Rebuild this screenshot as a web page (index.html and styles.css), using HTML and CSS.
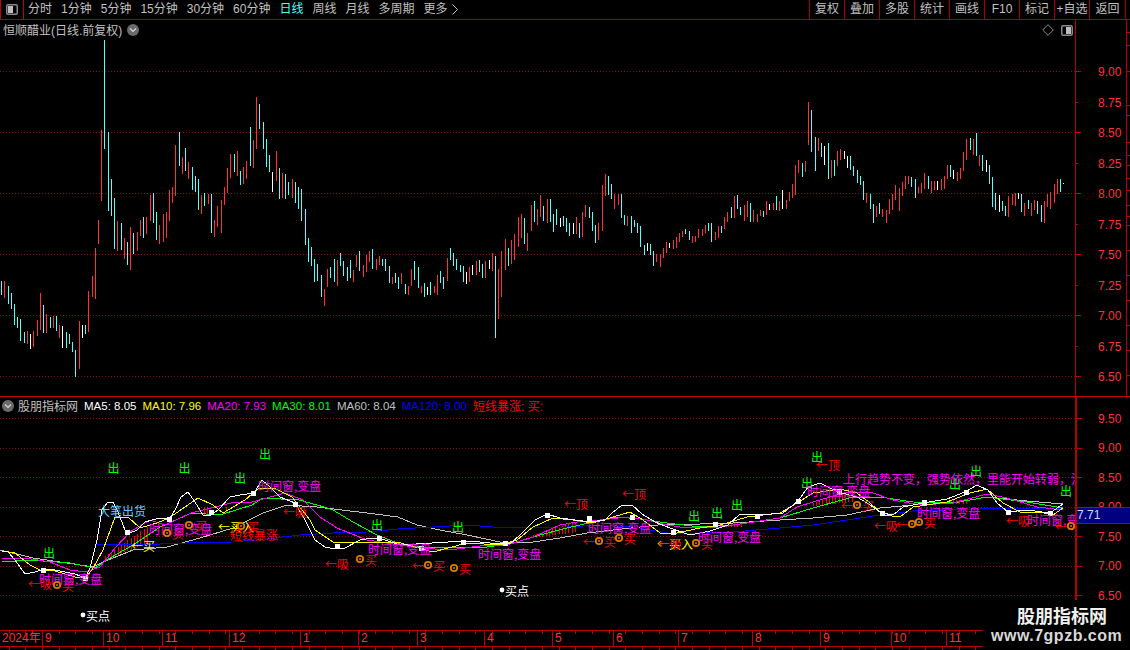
FILE: index.html
```html
<!DOCTYPE html>
<html lang="zh">
<head>
<meta charset="utf-8">
<title>恒顺醋业</title>
<link rel="stylesheet" href="styles.css">
</head>
<body>
<div class="page">
  <header class="toolbar">
    <div class="panel-btn">
      <svg class="split-icon" viewBox="0 0 12 11"><rect x="0.75" y="0.75" width="10.5" height="9.5" rx="1.5" class="split-frame"/><rect x="2" y="2" width="5" height="7" class="split-left"/></svg>
    </div>
    <nav class="tabs">
      <span>分时</span><span>1分钟</span><span>5分钟</span><span>15分钟</span><span>30分钟</span><span>60分钟</span><span class="active">日线</span><span>周线</span><span>月线</span><span>多周期</span><span>更多</span>
      <svg class="more-arrow" viewBox="0 0 6 11"><path d="M0.5 0.5 L5.5 5.5 L0.5 10.5" /></svg>
    </nav>
    <div class="tools">
      <span>复权</span><span>叠加</span><span>多股</span><span>统计</span><span>画线</span><span>F10</span><span>标记</span><span>+自选</span><span>返回</span>
    </div>
  </header>

  <section class="main-panel">
    <svg class="chart main-chart" viewBox="0 20 1130 376">
      <g class="grid">
        <path d="M0 71.5H1075M0 132.5H1075M0 193.5H1075M0 254.5H1075M0 315.5H1075M0 376.5H1075"/>
      </g>
      <g id="candles"></g>
      <path class="axis" d="M1075.5 20V396M1126.5 20V396"/>
      <path class="axis" d="M1075 71.5H1081M1075 102.5H1078M1075 132.5H1081M1075 163.5H1078M1075 193.5H1081M1075 224.5H1078M1075 254.5H1081M1075 285.5H1078M1075 315.5H1081M1075 346.5H1078M1075 376.5H1081"/>
      <path class="axis" d="M1126 32.5H1130M1126 45.5H1130M1126 71.5H1130M1126 105.5H1130M1126 115.5H1130M1126 142.5H1130M1126 155.5H1130M1126 165.5H1130M1126 178.5H1130M1126 190.5H1130M1126 205.5H1130M1126 216.5H1130M1126 225.5H1130M1126 250.5H1130M1126 275.5H1130M1126 300.5H1130M1126 325.5H1130M1126 350.5H1130M1126 375.5H1130"/>
      <g class="price">
        <text x="1098" y="72">9.00</text><text x="1098" y="103">8.75</text><text x="1098" y="133">8.50</text><text x="1098" y="164">8.25</text><text x="1098" y="194">8.00</text><text x="1098" y="225">7.75</text><text x="1098" y="255">7.50</text><text x="1098" y="286">7.25</text><text x="1098" y="316">7.00</text><text x="1098" y="347">6.75</text><text x="1098" y="377">6.50</text>
      </g>
    </svg>
    <div class="stock-title">
      <span>恒顺醋业(日线.前复权)</span>
      <svg class="chev-icon" viewBox="0 0 12 12"><circle cx="6" cy="6" r="6" class="chev-disc"/><path d="M3 4.5 L6 7.5 L9 4.5" class="chev-mark"/></svg>
    </div>
    <div class="chart-tools">
      <svg class="diamond-icon" viewBox="0 0 12 12"><path d="M6 0.7 L11.3 6 L6 11.3 L0.7 6 Z"/></svg>
      <svg class="split-icon" viewBox="0 0 12 11"><rect x="0.75" y="0.75" width="10.5" height="9.5" rx="1.5" class="split-frame"/><rect x="5" y="2" width="5" height="7" class="split-left"/></svg>
    </div>
  </section>

  <section class="lower-panel">
    <svg class="chart lower-chart" viewBox="0 397 1130 253">
      <defs><clipPath id="plot"><rect x="0" y="397" width="1075" height="233"/></clipPath></defs>
      <g class="grid">
        <path d="M0 418.5H1075M0 448.5H1075M0 477.5H1075M0 507.5H1075M0 536.5H1075M0 566.5H1075M0 595.5H1075"/>
      </g>
      <g id="fills"></g>
      <g class="curves">
        <polyline class="c-gray" points="0,550 33,558 67,563 93,567 103,562 133,550 167,547 200,538 233,528 263,513 287,505 317,507 367,513 398,517 417,525 440,530 467,535 500,542 533,542 560,538 587,533 613,530 640,527 667,524 700,524 733,523 780,520 813,518 847,515 880,508 913,505 953,503 987,497 1027,501 1063,504"/>
        <polyline class="c-blue" points="95,544 160,544 187,543 233,542 267,539 300,535 333,533 367,532 398,529 433,527 467,525 493,527 533,527 567,527 600,525 633,527 667,533 700,533 733,532 780,528 813,525 847,520 880,515 913,511 980,509 1063,508"/>
        <polyline class="c-green" points="2,562 30,560 70,563 95,568 110,558 133,545 160,527 187,515 191,513 220,515 252,505 263,498 299,500 324,507 333,510 353,522 377,535 400,544 420,547 457,547 487,547 513,543 540,535 567,528 593,522 617,517 640,519 667,523 700,527 733,525 780,518 813,508 853,497 880,497 913,502 953,503 987,497 1027,502 1063,508"/>
        <polyline class="c-magenta" points="2,559 25,558 50,562 70,570 85,572 100,567 115,548 130,532 150,520 165,525 191,513 231,503 252,502 285,493 303,500 320,517 337,528 367,540 400,545 420,548 450,550 480,546 507,545 533,537 560,525 577,522 600,520 627,517 647,520 667,525 687,528 720,527 747,523 780,518 797,507 813,502 847,492 870,492 893,500 920,505 953,503 987,494 1007,498 1037,507 1063,510"/>
        <polyline class="c-yellow" points="2,551 15,553 30,565 40,570 55,571 75,577 85,578 92,570 103,550 115,517 128,517 140,528 157,523 169,518 198,498 213,505 223,513 245,500 259,488 274,488 292,497 310,520 315,530 333,542 367,543 397,542 433,552 467,543 500,545 517,540 533,527 553,518 573,520 593,523 613,517 630,512 643,520 660,533 677,533 700,528 720,525 747,517 780,513 797,503 813,493 840,489 857,493 870,503 883,515 900,517 913,507 947,502 970,493 987,489 1003,503 1020,512 1040,512 1053,515 1063,508"/>
        <polyline class="c-white" points="2,551 8,552 15,560 25,574 35,572 45,569 55,570 65,572 75,574 85,578 90,568 97,540 102,510 107,503 113,502 118,512 125,530 130,533 137,530 145,522 152,520 160,518 170,518 175,510 181,497 188,492 195,502 203,515 210,516 218,510 230,497 240,495 254,493 262,480 270,487 280,497 295,503 305,520 315,540 325,547 335,549 345,548 360,540 372,538 385,540 400,545 448,542 470,541 490,543 510,544 520,535 535,520 547,514 560,518 575,520 590,522 605,520 612,513 622,505 632,505 642,514 655,522 670,528 690,535 710,531 728,525 740,514 760,515 783,513 798,501 808,487 820,483 838,492 857,497 867,503 882,513 893,515 903,507 923,503 947,499 965,492 977,485 988,490 997,503 1008,512 1027,510 1050,513 1063,504"/>
      </g>
      <g class="squares">
        <rect x="41" y="568" width="5" height="5"/><rect x="83" y="576" width="5" height="5"/><rect x="125" y="530" width="5" height="5"/><rect x="167" y="517" width="5" height="5"/><rect x="209" y="510" width="5" height="5"/><rect x="251" y="491" width="5" height="5"/><rect x="293" y="502" width="5" height="5"/><rect x="335" y="544" width="5" height="5"/><rect x="377" y="536" width="5" height="5"/><rect x="419" y="546" width="5" height="5"/><rect x="461" y="540" width="5" height="5"/><rect x="503" y="541" width="5" height="5"/><rect x="545" y="513" width="5" height="5"/><rect x="587" y="516" width="5" height="5"/><rect x="630" y="515" width="5" height="5"/><rect x="671" y="530" width="5" height="5"/><rect x="713" y="522" width="5" height="5"/><rect x="755" y="514" width="5" height="5"/><rect x="796" y="499" width="5" height="5"/><rect x="837" y="490" width="5" height="5"/><rect x="880" y="511" width="5" height="5"/><rect x="922" y="500" width="5" height="5"/><rect x="964" y="490" width="5" height="5"/><rect x="1006" y="510" width="5" height="5"/><rect x="1048" y="511" width="5" height="5"/>
      </g>
      <g clip-path="url(#plot)">
        <g class="lbl l-magenta">
          <text x="39" y="578">时间窗,变盘</text><text x="149" y="528">时间窗,变盘</text><text x="258" y="485">时间窗,变盘</text><text x="368" y="548">时间窗,变盘</text><text x="478" y="553">时间窗,变盘</text><text x="588" y="527">时间窗,变盘</text><text x="698" y="536">时间窗,变盘</text><text x="807" y="490">时间窗,变盘</text><text x="917" y="512">时间窗,变盘</text><text x="1027" y="519">时间窗,变盘</text>
          <text x="843" y="478">上行趋势不变，强势依然，里能开始转弱，注意</text>
        </g>
        <g class="lbl l-yellow">
          <text x="131" y="545">←买</text><text x="218" y="526">←买入</text><text x="657" y="543">←买入</text>
        </g>
        <g class="lbl l-red">
          <text x="28" y="583">←吸</text><text x="283" y="511">←吸</text><text x="325" y="563">←吸</text><text x="658" y="543">←吸</text><text x="874" y="525">←吸</text><text x="1006" y="520">←吸</text>
          <text x="564" y="503">←顶</text><text x="622" y="493">←顶</text><text x="816" y="464">←顶</text>
          <text x="230" y="534">短线暴涨</text>
          <text x="62" y="585">买</text><text x="172" y="533">买</text><text x="195" y="525">买</text><text x="247" y="526">买</text><text x="365" y="559">买</text><text x="412" y="565">←</text><text x="433" y="565">买</text><text x="459" y="568">买</text><text x="583" y="541">←</text><text x="604" y="541">买</text><text x="624" y="538">买</text><text x="701" y="543">买</text><text x="841" y="505">←</text><text x="862" y="505">买</text><text x="896" y="524">←</text><text x="924" y="522">买</text><text x="1055" y="526">←</text>
        </g>
        <g class="bullseye" id="bullseye">
          <circle cx="57" cy="585" r="3.2"/><circle cx="167" cy="533" r="3.2"/><circle cx="189" cy="525" r="3.2"/><circle cx="241" cy="526" r="3.2"/><circle cx="360" cy="559" r="3.2"/><circle cx="428" cy="565" r="3.2"/><circle cx="454" cy="568" r="3.2"/><circle cx="599" cy="541" r="3.2"/><circle cx="619" cy="538" r="3.2"/><circle cx="696" cy="543" r="3.2"/><circle cx="857" cy="505" r="3.2"/><circle cx="912" cy="524" r="3.2"/><circle cx="919" cy="522" r="3.2"/><circle cx="1071" cy="526" r="3.2"/>
        </g>
        <g class="lbl l-cyan"><text x="98" y="510">大笔出货</text></g>
        <g class="lbl l-green">
          <text x="107.5" y="467">出</text><text x="178.5" y="467">出</text><text x="234" y="477">出</text><text x="259" y="453">出</text><text x="43" y="552">出</text><text x="371" y="524">出</text><text x="452" y="526">出</text><text x="688" y="515">出</text><text x="711" y="512">出</text><text x="731" y="504">出</text><text x="811" y="456">出</text><text x="801" y="482">出</text><text x="949" y="483">出</text><text x="970" y="470">出</text><text x="1060" y="490">出</text>
        </g>
        <g class="lbl l-white"><text x="86" y="615">买点</text><text x="505" y="590">买点</text></g>
        <circle class="dot" cx="83" cy="615" r="2.4"/><circle class="dot" cx="502" cy="590" r="2.4"/>
      </g>
      <path class="axis axis-wide" d="M1076 397V600"/>
      <path class="axis" d="M1076 418.5H1082M1076 448.5H1082M1076 477.5H1082M1076 507.5H1082M1076 536.5H1082M1076 566.5H1082M1076 595.5H1082"/>
      <g class="price">
        <text x="1098" y="419">9.50</text><text x="1098" y="448">9.00</text><text x="1098" y="478">8.50</text><text x="1098" y="507">8.00</text><text x="1098" y="537">7.50</text><text x="1098" y="566">7.00</text><text x="1098" y="596">6.50</text>
      </g>
      <rect class="last-box" x="1077" y="507" width="53" height="16"/>
      <path class="axis" d="M1077 507.5H1130M1077 523.5H1130"/>
      <text class="last-text" x="1077" y="515">7.71</text>
      <g id="time-ticks"></g>
      <path class="axis" d="M0 630.5H1130M0 646.5H1130M42.5 630V646M103.5 630V646M162.5 630V646M229.5 630V646M300.5 630V646M358.5 630V646M417.5 630V646M484.5 630V646M552.5 630V646M613.5 630V646M678.5 630V646M752.5 630V646M820.5 630V646M891.5 630V646M946.5 630V646"/>
      <g class="price">
        <text x="2" y="638">2024年</text><text x="45" y="638">9</text><text x="106" y="638">10</text><text x="165" y="638">11</text><text x="232" y="638">12</text><text x="303" y="638">1</text><text x="361" y="638">2</text><text x="420" y="638">3</text><text x="487" y="638">4</text><text x="555" y="638">5</text><text x="616" y="638">6</text><text x="681" y="638">7</text><text x="755" y="638">8</text><text x="823" y="638">9</text><text x="893" y="638">10</text><text x="949" y="638">11</text>
      </g>
    </svg>
    <div class="ind-header">
      <svg class="chev-icon" viewBox="0 0 12 12"><circle cx="6" cy="6" r="6" class="chev-disc"/><path d="M3 4.5 L6 7.5 L9 4.5" class="chev-mark"/></svg>
      <span class="ind-name">股朋指标网</span>
      <span class="ma m-white">MA5: 8.05</span>
      <span class="ma m-yellow">MA10: 7.96</span>
      <span class="ma m-magenta">MA20: 7.93</span>
      <span class="ma m-green">MA30: 8.01</span>
      <span class="ma m-gray">MA60: 8.04</span>
      <span class="ma m-blue">MA120: 8.00</span>
      <span class="ma m-red">短线暴涨: 买:</span>
    </div>
    <div class="watermark">
      <div class="wm-name">股朋指标网</div>
      <div class="wm-url">www.7gpzb.com</div>
    </div>
  </section>
</div>
<script src="script.js"></script>
</body>
</html>
```

FILE: styles.css
```css
* { box-sizing: border-box; }
html, body { margin: 0; padding: 0; background: #000; }
body { font-family: "Liberation Sans", "Noto Sans CJK SC", sans-serif; font-size: 12px; color: #c0c0c0; }
.page { width: 1130px; height: 650px; overflow: hidden; display: flex; flex-direction: column; background: #000; }

.toolbar { height: 20px; flex: none; display: flex; align-items: center; border-bottom: 1px solid #a80000; line-height: 19px; }
.panel-btn { width: 24px; height: 19px; flex: none; display: flex; align-items: center; justify-content: center; border-left: 1px solid #c00000; border-right: 1px solid #c00000; }
.split-icon { width: 12px; height: 11px; display: block; }
.split-frame { fill: none; stroke: #8a8a8a; stroke-width: 1.5; }
.split-left { fill: #bdbdbd; }
.tabs { display: flex; align-items: center; gap: 9px; margin-left: 4px; flex: 1; white-space: nowrap; }
.tabs .active { color: #4dffff; }
.more-arrow { width: 6px; height: 11px; margin-left: -5px; fill: none; stroke: #c0c0c0; stroke-width: 1; }
.tools { display: flex; height: 19px; margin-right: 4px; flex: none; }
.tools span { width: 35px; text-align: center; border-left: 1px solid #a80000; white-space: nowrap; }
.tools span:last-child { width: 37px; border-right: 1px solid #a80000; }

.main-panel { position: relative; height: 376px; flex: none; }
.lower-panel { position: relative; height: 254px; flex: none; border-top: 1px solid #c80000; }
.chart { display: block; width: 1130px; }
.main-chart { height: 376px; }
.lower-chart { height: 253px; }

.stock-title { position: absolute; left: 3px; top: 1px; height: 17px; display: flex; align-items: center; gap: 5px; white-space: nowrap; }
.chev-icon { width: 12px; height: 12px; display: block; flex: none; }
.chev-disc { fill: #6a6a6a; }
.chev-mark { fill: none; stroke: #d8d8d8; stroke-width: 1.2; }
.chart-tools { position: absolute; right: 57px; top: 4px; display: flex; align-items: center; gap: 7px; }
.diamond-icon { width: 12px; height: 12px; fill: none; stroke: #8a8a8a; stroke-width: 1; display: block; }

.ind-header { position: absolute; left: 2px; top: 0; height: 17px; display: flex; align-items: center; white-space: nowrap; }
.ind-name { margin: 0 6px 0 4px; }
.ma { font-size: 11.5px; margin-right: 6px; }
.m-white { color: #fff; } .m-yellow { color: #ff0; } .m-magenta { color: #f0f; } .m-green { color: #0f0; }
.m-gray { color: #c0c0c0; } .m-blue { color: #0000ff; } .m-red { color: #f00; font-size: 12px; }

.grid path { fill: none; stroke: #8c0a0a; stroke-width: 1; stroke-dasharray: 1 2; shape-rendering: crispEdges; }
.axis { fill: none; stroke: #b80000; stroke-width: 1; shape-rendering: crispEdges; }
.axis-wide { stroke-width: 2; }
.price text { font: 12px "Liberation Sans", "Noto Sans CJK SC", sans-serif; fill: #ff3232; dominant-baseline: central; }

.bar { stroke-width: 1; shape-rendering: crispEdges; fill: none; }
.bar-r { stroke: #ff3232; } .bar-c { stroke: #54ffff; } .bar-w { stroke: #fff; }
.fill-bar { fill: none; stroke: #f00; stroke-width: 1; shape-rendering: crispEdges; }

.curves polyline { fill: none; stroke-width: 1; shape-rendering: crispEdges; }
.c-white { stroke: #fff; } .c-yellow { stroke: #ff0; } .c-magenta { stroke: #f0f; } .c-green { stroke: #0f0; } .c-gray { stroke: #c0c0c0; } .c-blue { stroke: #0000ff; }
.squares rect { fill: #fff; }

.lbl text { font: 12px "Noto Sans CJK SC", "Liberation Sans", sans-serif; dominant-baseline: central; }
.l-magenta text { fill: #f0f; } .l-yellow text { fill: #ff0; } .l-red text { fill: #f00; } .l-cyan text { fill: #66ccff; } .l-green text { fill: #0f0; } .l-white text { fill: #fff; }
.bullseye circle { fill: #000; stroke: #e07800; stroke-width: 1.8; }
.bullseye circle.core { fill: #e07800; stroke: none; }
.dot { fill: #fff; }

.last-box { fill: #000080; stroke: none; }
.last-text { font: 12px "Liberation Sans", sans-serif; fill: #d8d8ff; dominant-baseline: central; }

.watermark { position: absolute; left: 983px; top: 205px; width: 147px; height: 49px; background: #000; color: #e6e6e6; }
.wm-name { margin: 2px 0 0 34px; font-size: 18px; font-weight: 700; line-height: 22px; color: #f0f0f0; font-family: "Noto Sans CJK SC", sans-serif; white-space: nowrap; }
.wm-url { margin: 1px 0 0 8px; font-size: 16px; font-weight: 700; letter-spacing: 0.5px; line-height: 18px; color: #d8d8d8; white-space: nowrap; }
```

FILE: script.js
```js
// Daily bars read off the chart: [x, top, bottom, colour] in 3x crop units per block.
var blocks = [
 {ox:0,oy:40,d:"4,724,765,c 13,724,773,r 25,739,791,c 34,759,807,c 43,793,855,c 52,832,864,c 61,838,903,c 73,877,909,c 82,873,912,r 91,882,927,w 100,873,921,r 112,840,888,r 121,759,870,r 130,796,879,c 139,822,879,r 151,832,864,c 160,827,864,r 169,828,873,c 178,855,894,r 187,858,924,w 199,877,924,c 208,882,912,c 217,907,936,c 226,930,1010,c 238,843,987,r 247,855,894,w 256,855,882,c 265,753,876,r 277,708,771,r 286,624,777,r 295,540,612,r 304,270,483,r 313,0,327,c 325,276,513,c 334,417,528,c 343,474,627,c 352,543,633,r 364,549,630,c 373,594,657,r 382,606,675,c 391,561,690,r 400,579,642,c 412,576,633,r 421,540,588,r 430,531,594,c 439,531,582,r 451,465,543,r 460,459,549,c 469,516,600,c 478,555,612,r 490,522,606,r 499,516,594,r 508,450,543,r 517,441,489,r 526,315,468,r 538,276,378,c 547,351,402,r 556,324,393,c 565,366,417,r 577,381,450,c 586,408,456,c 595,417,510,c 604,465,522,r 613,459,498,c 625,462,492,r 634,462,579,c 643,540,591,r 652,498,561,r 664,480,579,r 673,441,495,r 682,384,459,r 691,342,414,r 703,342,396,c 712,333,408,r 721,393,435,c 730,381,432,r 739,363,417,r 751,261,378,c 760,300,384,r 769,171,327,r 778,192,267,c 790,246,327,c 799,297,381,c 808,345,396,c 817,396,456,w 829,333,423,r 838,384,477,c 847,399,474,r 856,402,477,c 865,426,465,c 877,417,474,r 886,426,489,c 895,441,507,c"},
 {ox:300,oy:160,d:"4,87,183,c 16,147,255,c 25,234,306,c 34,261,318,c 43,297,366,c 52,312,363,c 64,345,411,c 73,387,438,r 82,327,381,r 91,321,354,c 103,297,366,c 112,300,378,r 121,279,318,c 130,303,348,c 142,321,363,c 151,300,354,c 160,330,366,r 169,285,321,r 178,273,333,c 190,315,351,r 199,285,336,r 208,273,306,r 217,267,327,c 229,297,330,r 238,288,315,r 247,297,318,c 256,297,333,c 268,318,369,c 277,351,372,r 286,339,369,c 295,351,387,c 304,339,372,r 316,372,402,c 325,378,405,r 334,327,378,r 343,303,360,c 355,321,384,c 364,378,399,r 373,369,411,c 382,381,405,w 391,366,405,c 403,378,399,r 412,345,405,r 421,333,369,c 430,351,387,c 442,294,363,r 451,264,300,c 460,279,318,c 469,297,330,c 481,315,336,c 490,318,366,c 499,336,372,w 508,321,366,r 517,315,345,w 529,303,345,r 538,300,336,c 547,312,354,c 556,303,354,r 568,300,327,w 577,279,333,r 586,288,534,c 595,327,477,r 604,273,411,r 616,237,330,r 625,264,318,c 634,240,312,r 643,222,300,r 655,171,261,r 664,162,234,r 673,174,252,c 682,219,273,r 694,135,213,r 703,123,186,c 712,147,195,r 721,105,171,r 730,138,183,c 742,117,189,r 751,117,186,c 760,162,216,c 769,147,195,c 781,174,201,w 790,168,198,c 799,174,216,c 808,189,228,c 820,189,222,w 829,171,222,r 838,189,234,c 847,156,231,r 856,135,171,r 868,141,174,c 877,156,213,c 886,195,249,c 895,189,240,r"},
 {ox:600,oy:90,d:"7,285,423,r 16,252,318,r 25,258,315,c 34,282,327,c 43,312,357,r 55,312,345,r 64,312,384,c 73,375,405,c 82,378,408,r 94,378,429,c 103,390,411,c 112,399,429,c 121,408,471,c 133,465,495,c 142,459,483,w 151,462,495,c 160,483,528,c 169,492,516,r 181,492,531,r 190,474,504,r 199,456,489,r 208,459,474,w 220,450,477,r 229,441,474,r 238,429,456,r 247,423,441,r 256,417,432,c 268,423,450,c 277,438,459,r 286,438,456,r 295,417,444,r 307,417,438,r 316,405,429,r 325,399,423,c 334,399,456,c 346,426,450,r 355,408,444,r 364,408,429,c 373,381,417,r 382,366,396,r 394,351,384,c 403,318,384,r 412,315,357,c 421,351,375,c 433,345,393,r 442,333,381,r 451,339,396,c 460,360,396,r 472,372,396,r 481,360,378,r 490,363,381,c 499,333,375,r 508,342,360,w 520,339,360,r 529,318,360,c 538,333,363,r 547,300,357,w 559,330,357,r 568,306,333,r 577,282,324,r 586,225,315,r 595,210,249,r 607,219,261,c 616,213,246,r 625,36,165,r 634,60,186,c 646,141,243,c 655,144,183,r 664,159,201,c 673,168,225,w 685,159,267,c 694,210,264,r 703,210,258,c 712,183,228,r 721,177,210,r 733,183,207,w 742,198,234,w 751,198,240,c 760,228,258,c 772,240,279,c 781,258,285,c 790,273,330,c 799,309,339,r 811,312,357,c 820,342,399,c 829,348,381,r 838,339,372,c"},
 {ox:880,oy:90,d:"7,357,381,r 19,360,399,r 28,327,372,r 37,312,360,r 46,285,330,r 58,294,363,r 67,276,318,r 76,258,297,r 85,258,282,r 94,261,291,c 106,267,324,c 115,291,309,r 124,279,309,r 133,249,297,r 145,258,297,c 154,273,309,r 163,273,300,r 172,273,300,w 184,267,300,r 193,258,297,r 202,225,267,r 211,225,261,c 220,240,267,w 232,246,273,r 241,234,267,r 250,186,243,r 259,147,210,r 271,144,180,c 280,147,195,r 289,129,198,c 298,195,228,r 307,195,243,c 319,210,246,w 328,225,282,c 337,261,351,c 346,309,360,c 358,315,366,w 367,333,363,c 376,348,378,c 385,318,381,r 397,312,345,r 406,309,348,r 415,309,327,w 424,312,366,c 433,339,378,r 445,330,357,c 454,339,378,r 463,330,360,r 472,333,372,c 484,345,396,c 493,333,399,r 502,312,351,r 511,306,357,r 523,282,339,r 532,267,312,r 541,267,306,c 550,279,282,w"}
];
var NS = "http://www.w3.org/2000/svg";
function seg(parent, cls, d) {
  var p = document.createElementNS(NS, "path");
  p.setAttribute("class", cls);
  p.setAttribute("d", d);
  parent.appendChild(p);
}
var paths = {r: "", c: "", w: ""};
blocks.forEach(function (b) {
  b.d.split(" ").forEach(function (s) {
    var v = s.split(",");
    var x = Math.floor(b.ox + (+v[0]) / 3) + 0.5;
    var t = Math.round(b.oy + (+v[1]) / 3);
    var e = Math.round(b.oy + (+v[2]) / 3);
    paths[v[3]] += "M" + x + " " + t + "V" + e;
  });
});
var candles = document.getElementById("candles");
seg(candles, "bar bar-r", paths.r);
seg(candles, "bar bar-c", paths.c);
seg(candles, "bar bar-w", paths.w);

// Red surge bars between the MA20 and MA30 lines.
var spans = [
  [105, 150, 556, 560, 525, 542], [204, 210, 507, 515, 507, 515], [226, 228, 507, 513, 507, 513],
  [533, 577, 535, 538, 522, 532], [728, 742, 523, 527, 522, 527], [813, 852, 503, 506, 490, 502],
  [950, 968, 500, 504, 500, 504]
];
var fd = "";
spans.forEach(function (s) {
  for (var x = s[0]; x <= s[1]; x += 3.25) {
    var k = s[1] > s[0] ? (x - s[0]) / (s[1] - s[0]) : 0;
    fd += "M" + (Math.floor(x) + 0.5) + " " + Math.round(s[2] + (s[4] - s[2]) * k) + "V" + Math.round(s[3] + (s[5] - s[3]) * k);
  }
});
seg(document.getElementById("fills"), "fill-bar", fd);

// Small day ticks along the time axis.
var td = "";
for (var x = 9; x < 1130; x += 16.67) {
  var px = Math.floor(x) + 0.5;
  td += "M" + px + " 631V634M" + px + " 647V650";
}
seg(document.getElementById("time-ticks"), "axis", td);

// Centre dot of each orange bullseye marker.
var eye = document.getElementById("bullseye");
Array.prototype.slice.call(eye.querySelectorAll("circle")).forEach(function (c) {
  var dot = document.createElementNS(NS, "circle");
  dot.setAttribute("class", "core");
  dot.setAttribute("cx", c.getAttribute("cx"));
  dot.setAttribute("cy", c.getAttribute("cy"));
  dot.setAttribute("r", "1");
  eye.appendChild(dot);
});
```
